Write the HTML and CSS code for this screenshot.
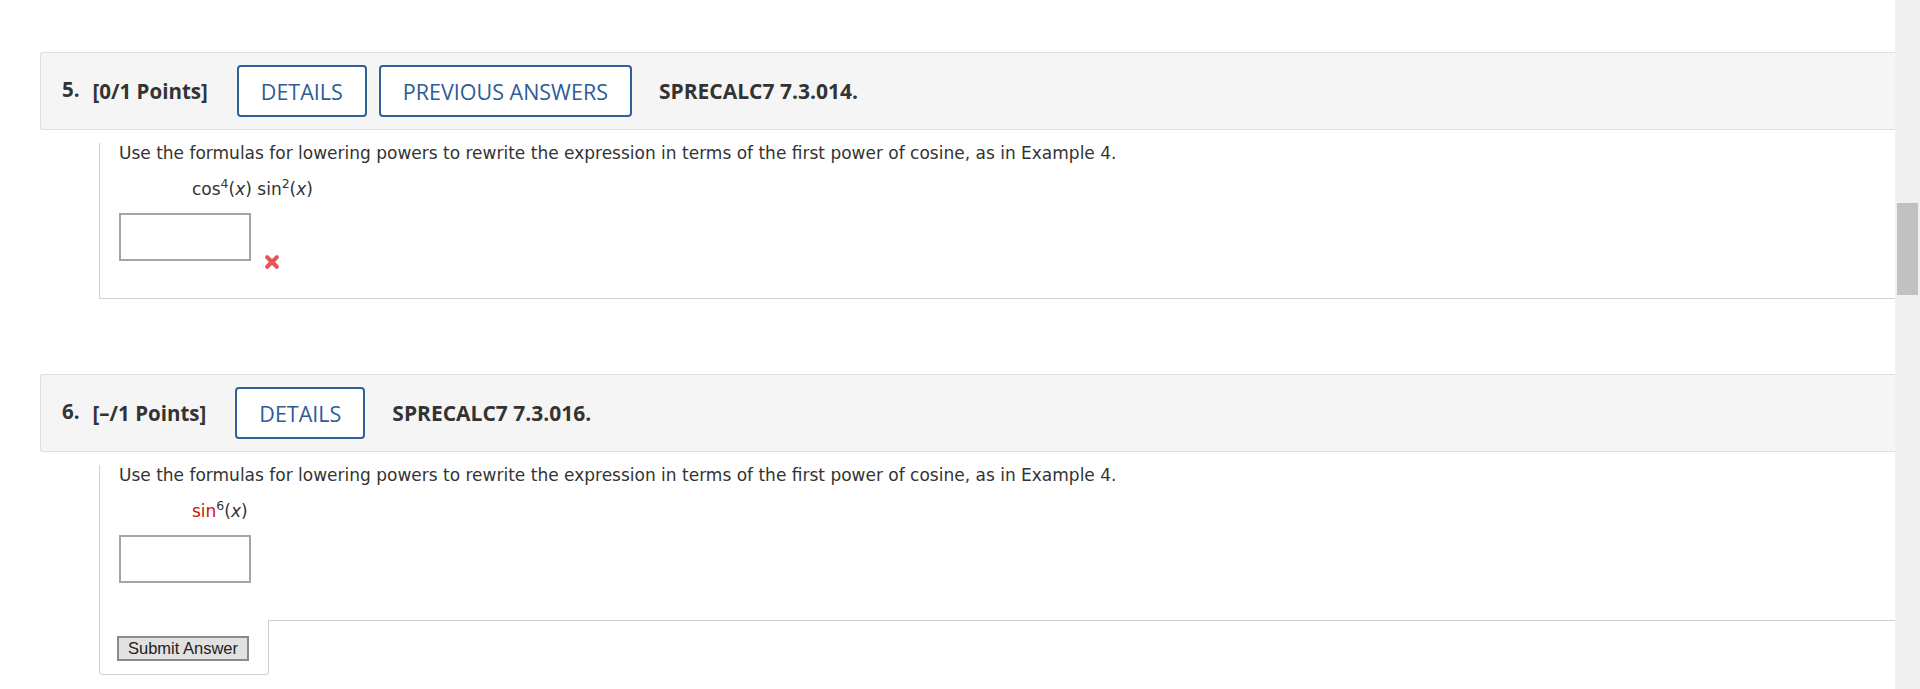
FILE: index.html
```html
<!DOCTYPE html>
<html lang="en">
<head>
<meta charset="utf-8">
<title>Questions</title>
<link rel="stylesheet" href="styles.css">
</head>
<body>
<div class="layout">
  <main class="page">
    <section class="question">
      <header class="q-head">
        <span class="q-num">5.</span>
        <span class="q-points">[0/1 Points]</span>
        <span class="btn-outline">DETAILS</span>
        <span class="btn-outline btn-gap">PREVIOUS ANSWERS</span>
        <span class="q-code">SPRECALC7 7.3.014.</span>
      </header>
      <div class="q-body q-body-closed">
        <p class="prompt">Use the formulas for lowering powers to rewrite the expression in terms of the first power of cosine, as in Example 4.</p>
        <p class="math">cos<sup>4</sup>(<i>x</i>) sin<sup>2</sup>(<i>x</i>)</p>
        <div class="answer-row">
          <span class="answer-box"></span>
          <svg class="wrong" width="16" height="16" viewBox="0 0 16 16" aria-label="incorrect">
            <path d="M3.2 3.2 L12.8 12.8 M12.8 3.2 L3.2 12.8" stroke="#e5545a" stroke-width="4.2" stroke-linecap="round" fill="none"/>
          </svg>
        </div>
      </div>
    </section>

    <section class="question question-2">
      <header class="q-head">
        <span class="q-num">6.</span>
        <span class="q-points">[&ndash;/1 Points]</span>
        <span class="btn-outline">DETAILS</span>
        <span class="q-code">SPRECALC7 7.3.016.</span>
      </header>
      <div class="q-body">
        <p class="prompt">Use the formulas for lowering powers to rewrite the expression in terms of the first power of cosine, as in Example 4.</p>
        <p class="math"><span class="red">sin</span><sup>6</sup>(<i>x</i>)</p>
        <div class="answer-row answer-row-2">
          <span class="answer-box"></span>
        </div>
      </div>
      <div class="q-foot">
        <div class="submit-tab"><button class="submit" type="button">Submit Answer</button></div>
        <div class="foot-rest"></div>
      </div>
    </section>
  </main>
  <aside class="scrollbar"><div class="thumb"></div></aside>
</div>
</body>
</html>
```

FILE: styles.css
```css
html, body {
  margin: 0;
  padding: 0;
  background: #ffffff;
}

body {
  height: 689px;
  overflow: hidden;
  font-family: "DejaVu Sans", Verdana, sans-serif;
  color: #333333;
}

.layout {
  display: flex;
  height: 689px;
}

.page {
  flex: 1;
  min-width: 0;
  padding: 52px 0 0 40px;
}

.scrollbar {
  width: 25px;
  flex: none;
  background: #f0f0f0;
}

.thumb {
  margin: 203px 2px 0 2px;
  height: 92px;
  background: #c1c1c1;
}

/* header bar */
.q-head {
  height: 78px;
  box-sizing: border-box;
  display: flex;
  align-items: center;
  padding-left: 21px;
  background: #f5f5f5;
  border: 1px solid #dedede;
  border-right: none;
  border-radius: 3px 0 0 3px;
  font-family: "Open Sans", sans-serif;
  color: #333333;
}

.q-num {
  font-weight: 700;
  font-size: 20.5px;
  margin-right: 13px;
  position: relative;
  top: -2px;
}

.q-points {
  font-weight: 700;
  font-size: 20.5px;
  margin-right: 29px;
}

.btn-outline {
  display: flex;
  align-items: center;
  justify-content: center;
  box-sizing: border-box;
  height: 52px;
  padding: 0 22px;
  border: 2px solid #2f6099;
  border-radius: 4px;
  background: #ffffff;
  color: #2e5c98;
  font-size: 21.5px;
  font-weight: 400;
}

.btn-gap {
  margin-left: 12px;
}

.q-code {
  font-weight: 700;
  font-size: 21px;
  margin-left: 27px;
}

/* body */
.q-body {
  margin-left: 59px;
  border-left: 1px solid #d0d0d0;
  padding-left: 19px;
}

.q-body-closed {
  border-bottom: 1px solid #d0d0d0;
  padding-bottom: 28px;
}

.prompt {
  margin: 13px 0 0 0;
  font-size: 17px;
  line-height: 20px;
  color: #333333;
}

.math {
  margin: 16px 0 0 0;
  padding-left: 73px;
  font-size: 17px;
  line-height: 20px;
  color: #333333;
}

.math sup {
  font-size: 12.5px;
  line-height: 0;
  vertical-align: 7px;
}

.red {
  color: #cc1111;
}

.answer-row {
  display: flex;
  align-items: flex-start;
  margin-top: 14px;
}

.answer-row-2 {
  margin-top: 14px;
  padding-bottom: 37px;
}

.answer-box {
  display: block;
  width: 132px;
  height: 48px;
  box-sizing: border-box;
  border: 2px solid #a5a5a5;
  background: #ffffff;
}

.wrong {
  display: block;
  margin: 41px 0 0 13px;
}

/* footer with submit */
.q-foot {
  display: flex;
  margin-left: 59px;
}

.submit-tab {
  width: 170px;
  box-sizing: border-box;
  border-left: 1px solid #d0d0d0;
  border-right: 1px solid #d0d0d0;
  border-bottom: 1px solid #d0d0d0;
  border-radius: 0 0 4px 4px;
  padding: 16px 0 13px 17px;
}

.foot-rest {
  flex: 1;
  border-top: 1px solid #d0d0d0;
}

.submit {
  display: block;
  width: 132px;
  height: 25px;
  margin: 0;
  padding: 0;
  box-sizing: border-box;
  border: 2px solid #8a8a8a;
  border-radius: 0;
  background: #e1e1e1;
  font-family: "Liberation Sans", Arial, sans-serif;
  font-size: 16.5px;
  line-height: 21px;
  color: #222222;
}

.question-2 {
  margin-top: 75px;
}
```
